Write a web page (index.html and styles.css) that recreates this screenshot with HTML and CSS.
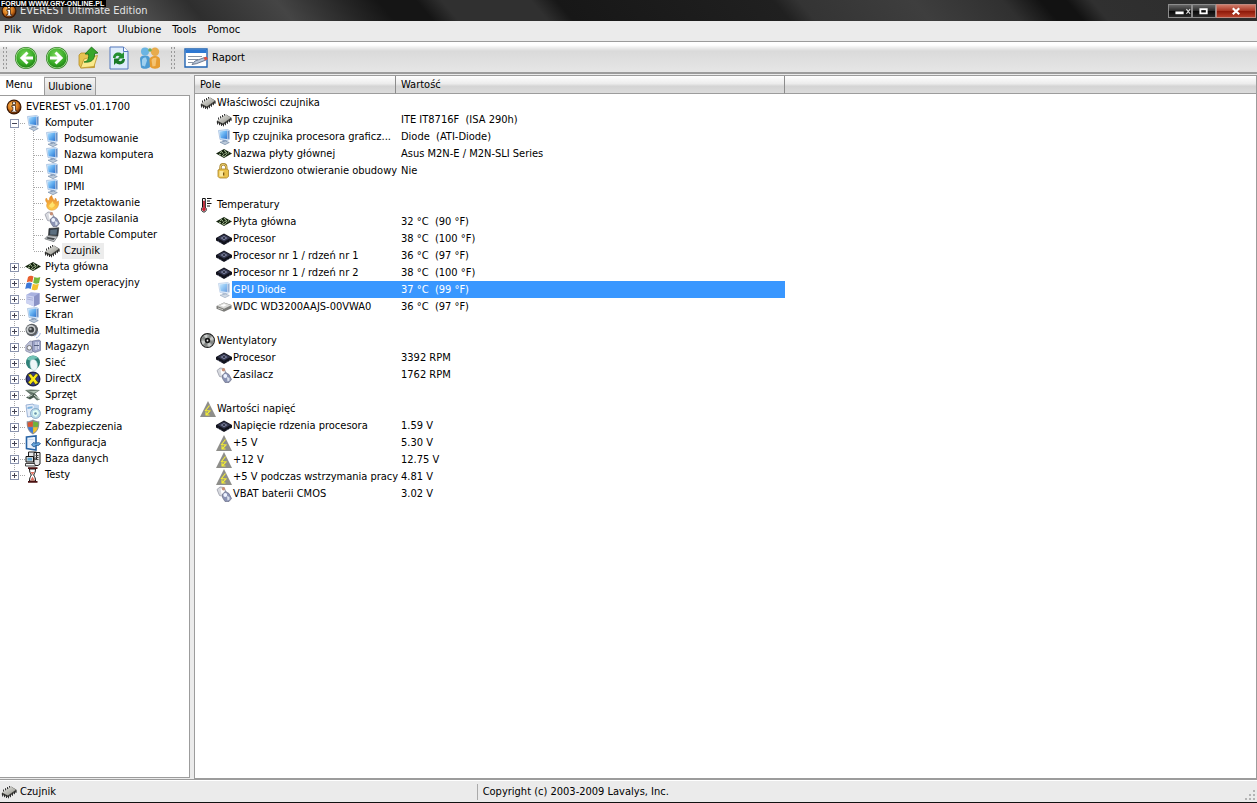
FILE: index.html
```html
<!DOCTYPE html>
<html lang="pl">
<head>
<meta charset="utf-8">
<title>EVEREST Ultimate Edition</title>
<link rel="stylesheet" href="styles.css">
</head>
<body>
<svg class="defs" aria-hidden="true">
  <defs>
    <linearGradient id="screen" x1="0" y1="0" x2="1" y2="1"><stop offset="0" stop-color="#b9e4ff"/><stop offset=".5" stop-color="#62aef0"/><stop offset="1" stop-color="#2f74cf"/></linearGradient>
    <linearGradient id="metal" x1="0" y1="0" x2="1" y2="1"><stop offset="0" stop-color="#f0f0ec"/><stop offset="1" stop-color="#8a8a82"/></linearGradient>
    <radialGradient id="orange" cx=".4" cy=".35" r=".7"><stop offset="0" stop-color="#ffc35a"/><stop offset=".6" stop-color="#d8791c"/><stop offset="1" stop-color="#6b2c05"/></radialGradient>
    <radialGradient id="green" cx=".45" cy=".35" r=".7"><stop offset="0" stop-color="#7bd95a"/><stop offset=".65" stop-color="#35a824"/><stop offset="1" stop-color="#187510"/></radialGradient>
    <linearGradient id="flame" x1="0" y1="0" x2="0" y2="1"><stop offset="0" stop-color="#e8842a"/><stop offset="1" stop-color="#ffcf4a"/></linearGradient>
  </defs>
  <symbol id="i-info" viewBox="0 0 16 16"><circle cx="8" cy="8" r="7.5" fill="#3a1803"/><circle cx="8" cy="8" r="6.3" fill="url(#orange)"/><path d="M6.500 3h3v2.400h-3zM5.800 6.500h3.700v5h1.200V13H5.600v-1.500h1.300V8H5.800z" fill="#fff" stroke="#2b1000" stroke-width=".7"/></symbol>
  <symbol id="i-pc" viewBox="0 0 16 16"><path d="M2.500 1.500l9-1 2 1v8.700l-2 1.300L4 10.500z" fill="#dceafa" stroke="#9ab8dc" stroke-width=".7"/><path d="M3.600 2.500l7.600-1v8.500L4.600 9.300z" fill="url(#screen)"/><path d="M11.600 1.500v9l1.500-.9V2.200z" fill="#6d90c4"/><path d="M6.500 10.800l4 .4.500 2-4.500.3z" fill="#8fa5c4"/><path d="M4 13.200l5.500-1.200 3.800 1.500-4.300 2.200z" fill="#bccada" stroke="#6f86a5" stroke-width=".6"/></symbol>
  <symbol id="i-flame" viewBox="0 0 16 16"><path d="M3.200 8C1 6 1.500 3.500 2.500 3c.3 2 1.800 2.700 2.800 2.500C5 3.500 6 1 8 .5c-.5 2 1.500 3 2 5 1-.5 1.300-1.300 1.200-2.500 1.500 1 1.500 3 1.200 4 1 0 1.800-.5 2-1.200 1 3.500-.5 9.200-6.400 9.400C4 15.200 1.500 12 3.200 8z" fill="url(#flame)" stroke="#d98a26" stroke-width=".5"/><path d="M6 9c2-1 2-2 2-3 2 2 1 3 3 3.500-.5 3-4.500 4.500-6 1.500z" fill="#ffe26d"/></symbol>
  <symbol id="i-plug" viewBox="0 0 16 16"><path d="M1 3.500L4 1l4 .5 2 4-2 5-4.500-1z" fill="#d7d9df" stroke="#999ca8" stroke-width=".8"/><path d="M4.500 2.500l3.500.5.500 4-3 1z" fill="#fff"/><circle cx="7.500" cy="2.800" r="1.700" fill="#c79078"/><path d="M6.500 8l3-2.500 3.500 2 2.500 5-2.500 3H9l-2.500-4z" fill="#8b93b4" stroke="#6b7088" stroke-width=".7"/><circle cx="9.300" cy="9" r="1.900" fill="#eef3ff"/><path d="M11 10l2.500 1v2.500l-2 1z" fill="#dce3ef"/></symbol>
  <symbol id="i-laptop" viewBox="0 0 16 16"><path d="M5 1.500l9.800-.8-1 8.300L4.500 8.200z" fill="#333c45" stroke="#222" stroke-width=".6"/><path d="M6.300 3l6.800-.7-.6 5.500-6.400-.3z" fill="#5c6f80"/><path d="M4 8.500l9.500 1-3.500 5.200L.8 11.800z" fill="#c2c5c8" stroke="#626669" stroke-width=".7"/><path d="M3.500 10l7.500 1.300-1.500 1.700-7-1.500z" fill="#45494d"/></symbol>
  <symbol id="i-chip" viewBox="0 0 16 16"><path d="M.8 9L10 2.500l5.500 3.300v1.700L7 13.200.8 10.700z" fill="#4a4a46"/><path d="M1.200 8.600L10 2.800l4.900 3L6.800 11.400z" fill="url(#metal)"/><path d="M1.500 9.500v3M3.500 10.200v3M5.500 11v3M7.500 11.500v2.800M9.500 10.200v3M11.500 8.800v3M13.500 7.500v2.700M15 6.500v2.500M2.500 5.500v2M4.500 4.200v2M6.500 3v2M8.500 2v1.500" stroke="#222" stroke-width=".9"/></symbol>
  <symbol id="i-board" viewBox="0 0 16 16"><path d="M0 7.500l8-4.500 8 4.500-8 4.500z" fill="#14240e"/><path d="M4 6.500l2-1m2-1l2 1m2 1l1 .8M3 8l2 1m1 .5l2 1 2-1M6 7l1-.5m2 .8l2-.8M7 8.500l1.500-.8m1.500.8l1.500-.7" stroke="#b7cda4" stroke-width="1"/></symbol>
  <symbol id="i-win" viewBox="0 0 16 16"><path d="M3 2c2-1.500 3.500-1.500 5.500-.5L7.300 7.300C5.500 6.300 3.800 6.300 1.800 7.300z" fill="#e9602f"/><path d="M9.300 2c2 1 4 1 6 0L14 8c-2 1-3.900.8-5.800-.2z" fill="#75b83c"/><path d="M1.500 8.200c2-1 3.700-.8 5.500 0l-1.300 5.800C4 13 2.300 13 .2 14z" fill="#3b78d8"/><path d="M7.900 8.700c2 1 3.900 1 5.900 0l-1.300 5.800c-2 1-4 1-5.900 0z" fill="#f3c12e"/></symbol>
  <symbol id="i-server" viewBox="0 0 16 16"><path d="M1 4l5-2.800 8.500.8v11L9 15.500 1 12z" fill="#a9b2e0"/><path d="M1 4l8 1.500v10L1 12z" fill="#cdd3f1"/><path d="M9 5.500L14.500 2v11L9 15.500z" fill="#8b93c6"/><path d="M2 6l6 1.200M2 8l6 1.200" stroke="#aab1da"/></symbol>
  <symbol id="i-sound" viewBox="0 0 16 16"><circle cx="6.800" cy="7" r="6.200" fill="#5c6064"/><circle cx="6" cy="6.500" r="4.600" fill="#c9ccce"/><circle cx="6.200" cy="6.700" r="2.900" fill="#3c4043"/><circle cx="5.500" cy="6" r="1.200" fill="#a9adb0"/><path d="M9 13c2.500-.5 3.500-2 4-4.500M11 15c2.500-1 3.800-2.700 4.300-5" fill="none" stroke="#9baed0"/></symbol>
  <symbol id="i-disks" viewBox="0 0 16 16"><path d="M.8 6.500L5 2l5 .8v9L5.500 14 .8 12z" fill="#bcc0d6" stroke="#74799a" stroke-width=".6"/><path d="M7.500 2L14 1l1.500 1v9.500l-5.500 2-2.500-1.500z" fill="#9ba2c6" stroke="#62688c" stroke-width=".6"/><circle cx="4.300" cy="8.800" r="2.300" fill="#eff1f7" stroke="#777"/><path d="M11 3v8M13.300 3v7" stroke="#e4e8f5"/><path d="M9 6.500h5" stroke="#56607e"/></symbol>
  <symbol id="i-net" viewBox="0 0 16 16"><circle cx="8" cy="7.500" r="7" fill="#2f8078"/><path d="M2 4C5 0 10 0 13 3c-2 1-4 .5-5.500 1.500S4 6 2 4z" fill="#72c2b5"/><path d="M5 8c0-3 2-4 4-3.500 2 .5 3.500 3 3.500 6S11 15.500 9 15.500 5 13 5 8z" fill="#eef6f8" stroke="#a5ced2" stroke-width=".6"/></symbol>
  <symbol id="i-dx" viewBox="0 0 16 16"><circle cx="8" cy="8" r="7.500" fill="#20244f"/><circle cx="8" cy="8" r="5.900" fill="#3a4088"/><path d="M2.800 3.500L6 2.800l2.200 3L11 2.500l2.500 1.300L10.300 8l3.200 4-3 1.500-2.300-3-2.700 3-2.500-2L6 8z" fill="#f8e817" stroke="#2e2d0d" stroke-width=".6"/></symbol>
  <symbol id="i-hw" viewBox="0 0 16 16"><path d="M0 3l6-.5 9 .5-5 3.500 5 6-3 1-6-5.500z" fill="#65766b"/><path d="M.5 3l5.500 1.300 8-.8-5 2.500z" fill="#b4c6b7"/><path d="M1 10.500l7-4 4 2-7 4z" fill="#47584e"/><path d="M3 10l4.500-2.200M9 8l5 4" stroke="#d3dfd3"/></symbol>
  <symbol id="i-prog" viewBox="0 0 16 16"><path d="M1 2l7-1 1.500 2v10l-7 1z" fill="#e4ecf8" stroke="#87a2cb" stroke-width=".8"/><path d="M2.500 4l5-.7v2l-5 .7z" fill="#7db2de"/><path d="M9 1l5 1v5H9z" fill="#bed5ee"/><circle cx="10.500" cy="10.500" r="5" fill="#b9dae9" stroke="#7197b7" stroke-width=".7"/><path d="M8 8l4-1 2 3-3 4-3-2z" fill="#e4fff4"/><circle cx="10.500" cy="10.500" r="1.300" fill="#6792af"/></symbol>
  <symbol id="i-shield" viewBox="0 0 16 16"><path d="M8 .5c2 1.300 4 1.700 6.300 1.800.2 6-1 10-6.300 13.200C2.700 12.300 1.500 8.300 1.700 2.300 4 2.200 6 1.800 8 .5z" fill="#888e99"/><path d="M7.800 2v5.700H3C2.700 6.300 2.700 5 2.700 3.500c2-.1 3.600-.5 5.100-1.500z" fill="#dc5630"/><path d="M8.200 2c1.500 1 3.100 1.400 5.100 1.500 0 1.500 0 2.800-.3 4.200H8.200z" fill="#70b43a"/><path d="M3.100 8.200h4.700v6c-2.500-1.500-4-3.500-4.700-6z" fill="#3b79d6"/><path d="M8.200 8.200h4.700c-.7 2.500-2.200 4.500-4.700 6z" fill="#f2c32a"/></symbol>
  <symbol id="i-conf" viewBox="0 0 16 16"><path d="M1.500 2L11 1v14l-9.500-1.500z" fill="#e9f1fb" stroke="#2663a5" stroke-width="1.600"/><path d="M3.500 4.500h5" stroke="#c4d6ec"/><path d="M6.500 10l2-2.500 2 .8 3-.8 2 1-1.500 1.700-3 .3L9 12z" fill="#68a6dc" stroke="#1e5690" stroke-width=".8"/></symbol>
  <symbol id="i-db" viewBox="0 0 16 16"><path d="M3.500 1h8v7h-8zM9 1.500h6V13l-2 1.500H9z" fill="#e7e7e7" stroke="#1d1d1d"/><path d="M10.500 4.500h3M10.500 6.500h3M10.500 8.500h3" stroke="#444"/><path d="M1 5.500h7.500v5.500H1z" fill="#d7d7d7" stroke="#111"/><path d="M2.500 6.800h4.500v2.700H2.500z" fill="#5da4ce"/><path d="M.5 12.500h9l1 2.500H.5z" fill="#fafafa" stroke="#111" stroke-width=".8"/></symbol>
  <symbol id="i-glass" viewBox="0 0 16 16"><path d="M4.500 2h6c0 3-.8 4-1.800 6 1 2 1.800 3 1.800 6h-6c0-3 .8-4 1.800-6-1-2-1.800-3-1.800-6z" fill="#fff" stroke="#111"/><path d="M5.500 5h4l-2 3zM5.300 13.500l2.200-4 2.300 4z" fill="#e0705f"/><path d="M3 1.200h9.500M3 14.800h9.500" stroke="#4a1010" stroke-width="1.800"/></symbol>
  <symbol id="i-lock" viewBox="0 0 16 16"><path d="M4.500 7V4.500c0-2 1-3.200 2.800-3.200s3 1.200 3 3.200V7" fill="none" stroke="#a8842a" stroke-width="2.400"/><path d="M4.500 7V4.500c0-2 1-3.200 2.800-3.200s3 1.200 3 3.200V7" fill="none" stroke="#f0d77a"/><path d="M2 7l2-1h7l1.500 1v6.500L10.500 15h-7L2 13.500z" fill="#eac14a" stroke="#a8842a" stroke-width=".8"/><path d="M3.500 8h4v5.500h-4z" fill="#fae79c"/><path d="M7 9.500h1.300v3H7z" fill="#785711"/></symbol>
  <symbol id="i-temp" viewBox="0 0 16 16"><path d="M2.500 1.500h2.800v8.700c2 2 .8 4.800-1.400 4.800S.5 12.200 2.500 10.200z" fill="#fff" stroke="#111"/><path d="M3.500 4h1v6.500c1.500 1 1 3.300-.6 3.300s-2-2.300-.4-3.300z" fill="#d11f32" stroke="#b01525" stroke-width=".7"/><path d="M7 1.500h4.500M7 4h3M7 6.500h4.500M7 9h3" stroke="#111"/></symbol>
  <symbol id="i-cpu" viewBox="0 0 16 16"><path d="M0 7L8 2.500 16 7v2.500L8 14 0 9.500z" fill="#11121c"/><path d="M1.500 7L8 3.400 14.500 7 8 10.800z" fill="#33364d"/><path d="M4.500 7L8 4.900 11.500 7 8 9.200z" fill="#7d83a2"/><path d="M6.300 7L8 6l1.700 1L8 8z" fill="#191b29"/><path d="M2 10l1 .7m1.500.8l1 .7m5 0l1-.7m1.500-.8l1-.7" stroke="#6a708c"/></symbol>
  <symbol id="i-hdd" viewBox="0 0 16 16"><path d="M.5 7L8 3.500l7.500 2.600v3.200L8 12.700.5 9.700z" fill="#7c7c79"/><path d="M.8 6.800L8 3.700l7.200 2.500L8 9.800z" fill="#d9d9d6"/><path d="M4.500 6.500l3.500-1.600 3 1-3.500 1.800z" fill="#fff"/><path d="M2 9l5 1.700" stroke="#c9c9c4"/></symbol>
  <symbol id="i-fan" viewBox="0 0 16 16"><circle cx="7.500" cy="7.500" r="6.900" fill="#a3a6a4" stroke="#222" stroke-width="1.200"/><path d="M7.500 7.500L4 2.500 7 1.500zM7.500 7.500l5-4 1.500 3zM7.500 7.500l4 5-3 1.500zM7.500 7.500l-5 4L1.500 8z" fill="#c9ccca"/><path d="M7.500 7.500L9 1.500l2.500 1.200zM7.500 7.500l6.500 1-1.500 3zM7.500 7.500l-1 6.500-3-2zM7.500 7.500L1.500 6l2-3z" fill="#808482"/><circle cx="7.500" cy="7.500" r="2.700" fill="#151515"/><circle cx="7.500" cy="7.500" r=".9" fill="#eee"/></symbol>
  <symbol id="i-volt" viewBox="0 0 16 16"><path d="M8 0l8 16H0z" fill="#8e8e8a"/><path d="M9.500 4.500L5.500 9.500l4.500.5-3.500 3.500M6 10.500V14h3.500" fill="none" stroke="#f5ee32" stroke-width="1.100"/></symbol>
  <symbol id="i-back" viewBox="0 0 24 24"><circle cx="12" cy="12" r="11" fill="#277b1b"/><circle cx="12" cy="12" r="10" fill="url(#green)" stroke="#b3e5a0" stroke-width=".8"/><path d="M12.500 5.500L5.800 12l6.700 6.500 2-2-3-2.900H19v-3.200h-7.500l3-2.900z" fill="#fff"/></symbol>
  <symbol id="i-fwd" viewBox="0 0 24 24"><circle cx="12" cy="12" r="11" fill="#277b1b"/><circle cx="12" cy="12" r="10" fill="url(#green)" stroke="#b3e5a0" stroke-width=".8"/><path d="M11.500 5.500l6.700 6.500-6.700 6.500-2-2 3-2.900H5v-3.200h7.500l-3-2.900z" fill="#fff"/></symbol>
  <symbol id="i-up" viewBox="0 0 24 24"><path d="M3 9l2-2h5l1.500 2h7v12.500L5 22 3 19z" fill="#e6c350" stroke="#b58b23" stroke-width=".8"/><path d="M4.500 22L8 13l13.500-3.500-3.500 11z" fill="#faea8c" stroke="#bb942c" stroke-width=".8"/><path d="M8 16c4.500-1 5-4 4.500-8H9l6.500-7L22 7l-3.500.5C19 13.500 15.500 17 8 16z" fill="#38a62c" stroke="#1c6f18" stroke-width=".8"/></symbol>
  <symbol id="i-reload" viewBox="0 0 24 24"><path d="M3 1h13.500L21 5.500V23H3z" fill="#dfecfb" stroke="#5579bd"/><path d="M16.500 1v4.500H21" fill="#fff" stroke="#5579bd"/><path d="M6 12c0-5 5.500-7 9-4l2-2v6.500h-6.500l2-2c-2-1.500-3.500-.5-4 1.500z" fill="#249030"/><path d="M18 13c0 5-5.500 7-9 4l-2 2v-6.500h6.500l-2 2c2 1.500 3.500.5 4-1.500z" fill="#1a7a28"/></symbol>
  <symbol id="i-people" viewBox="0 0 24 24"><path d="M2 13c0-3 3-3.500 5-3.500s5 .5 5 4V21c-2 2-7 2.500-9 .5z" fill="#4c9bd3"/><path d="M4 14c.5-2 2-2.500 4-2.500l1 3-2 6-3-1z" fill="#9fd0ef"/><circle cx="7" cy="5.500" r="4" fill="#6bb4e2"/><path d="M11.500 14c0-3 3-4 5.500-4s5 1 5 4v6.500c-2 3-8 3-10 0z" fill="#e69c31"/><path d="M13.500 14c1-2 3-2.500 5-2l-1 8-3 .5z" fill="#f4c373"/><circle cx="17" cy="5.800" r="4.200" fill="#e7ab4d"/><circle cx="12" cy="4" r="1.800" fill="#74ad57"/></symbol>
  <symbol id="i-report" viewBox="0 0 24 20"><path d="M1 1h22v18H1z" fill="#fff" stroke="#2164b3" stroke-width="1.400"/><path d="M1.500 1.500h21V5h-21z" fill="#2d78d2"/><path d="M4 8.500h14M4 11.500h10M4 14.500h5" stroke="#8794a5"/><path d="M8 16.500l3-3.500 9.500-3.500 1.500 2.500-9.500 3.700z" fill="#b9c7d9" stroke="#43536e" stroke-width=".7"/><path d="M19.500 9.800l3-1.300 1.500 2.500-3 1.400z" fill="#de5241"/></symbol>
</svg>

<header class="titlebar">
  <svg class="icon"><use href="#i-info"/></svg>
  <h1 class="title">EVEREST Ultimate Edition</h1>
  <span class="watermark">FORUM WWW.GRY-ONLINE.PL</span>
  <div class="controls">
    <button class="ctl" aria-label="Minimalizuj"><svg viewBox="0 0 24 13"><path d="M7 7h9v3H7z" fill="#fff"/><path d="M19 4.500l4 5m0-5l-4 5" stroke="#ddd" stroke-width="1.300"/></svg></button>
    <button class="ctl" aria-label="Maksymalizuj"><svg viewBox="0 0 24 13"><path d="M8 4.500h7v4.500H8z" fill="none" stroke="#fff" stroke-width="2"/></svg></button>
    <button class="ctl ctl-close" aria-label="Zamknij"><svg viewBox="0 0 38 13"><path d="M15.500 3.500l7 6.500m0-6.500l-7 6.500" stroke="#fff" stroke-width="2.400"/></svg></button>
  </div>
</header>

<nav class="menubar">
  <button>Plik</button><button>Widok</button><button>Raport</button><button>Ulubione</button><button>Tools</button><button>Pomoc</button>
</nav>

<div class="toolbar">
  <span class="grip"></span>
  <button aria-label="Wstecz"><svg><use href="#i-back"/></svg></button>
  <button aria-label="Dalej"><svg><use href="#i-fwd"/></svg></button>
  <button aria-label="W górę"><svg><use href="#i-up"/></svg></button>
  <button aria-label="Odśwież"><svg><use href="#i-reload"/></svg></button>
  <button aria-label="Użytkownicy"><svg><use href="#i-people"/></svg></button>
  <span class="grip grip-second"></span>
  <button class="report"><svg><use href="#i-report"/></svg>Raport</button>
</div>

<main class="workspace">
  <aside class="sidebar">
    <div class="tabs" role="tablist"><button class="tab active" role="tab" aria-selected="true">Menu</button><button class="tab" role="tab" aria-selected="false">Ulubione</button></div>
    <ul class="tree">
      <li class="node root"><svg class="icon"><use href="#i-info"/></svg><span class="label">EVEREST v5.01.1700</span></li>
      <li class="node first"><span class="guide"><button class="toggle open" aria-label="Zwiń Komputer"></button></span><svg class="icon"><use href="#i-pc"/></svg><span class="label">Komputer</span></li>
      <li>
        <ul class="branch">
          <li class="node"><svg class="icon"><use href="#i-pc"/></svg><span class="label">Podsumowanie</span></li>
          <li class="node"><svg class="icon"><use href="#i-pc"/></svg><span class="label">Nazwa komputera</span></li>
          <li class="node"><svg class="icon"><use href="#i-pc"/></svg><span class="label">DMI</span></li>
          <li class="node"><svg class="icon"><use href="#i-pc"/></svg><span class="label">IPMI</span></li>
          <li class="node"><svg class="icon"><use href="#i-flame"/></svg><span class="label">Przetaktowanie</span></li>
          <li class="node"><svg class="icon"><use href="#i-plug"/></svg><span class="label">Opcje zasilania</span></li>
          <li class="node"><svg class="icon"><use href="#i-laptop"/></svg><span class="label">Portable Computer</span></li>
          <li class="node last"><svg class="icon"><use href="#i-chip"/></svg><span class="label current">Czujnik</span></li>
        </ul>
      </li>
      <li class="node"><span class="guide"><button class="toggle" aria-label="Rozwiń Płyta główna"></button></span><svg class="icon"><use href="#i-board"/></svg><span class="label">Płyta główna</span></li>
      <li class="node"><span class="guide"><button class="toggle" aria-label="Rozwiń System operacyjny"></button></span><svg class="icon"><use href="#i-win"/></svg><span class="label">System operacyjny</span></li>
      <li class="node"><span class="guide"><button class="toggle" aria-label="Rozwiń Serwer"></button></span><svg class="icon"><use href="#i-server"/></svg><span class="label">Serwer</span></li>
      <li class="node"><span class="guide"><button class="toggle" aria-label="Rozwiń Ekran"></button></span><svg class="icon"><use href="#i-pc"/></svg><span class="label">Ekran</span></li>
      <li class="node"><span class="guide"><button class="toggle" aria-label="Rozwiń Multimedia"></button></span><svg class="icon"><use href="#i-sound"/></svg><span class="label">Multimedia</span></li>
      <li class="node"><span class="guide"><button class="toggle" aria-label="Rozwiń Magazyn"></button></span><svg class="icon"><use href="#i-disks"/></svg><span class="label">Magazyn</span></li>
      <li class="node"><span class="guide"><button class="toggle" aria-label="Rozwiń Sieć"></button></span><svg class="icon"><use href="#i-net"/></svg><span class="label">Sieć</span></li>
      <li class="node"><span class="guide"><button class="toggle" aria-label="Rozwiń DirectX"></button></span><svg class="icon"><use href="#i-dx"/></svg><span class="label">DirectX</span></li>
      <li class="node"><span class="guide"><button class="toggle" aria-label="Rozwiń Sprzęt"></button></span><svg class="icon"><use href="#i-hw"/></svg><span class="label">Sprzęt</span></li>
      <li class="node"><span class="guide"><button class="toggle" aria-label="Rozwiń Programy"></button></span><svg class="icon"><use href="#i-prog"/></svg><span class="label">Programy</span></li>
      <li class="node"><span class="guide"><button class="toggle" aria-label="Rozwiń Zabezpieczenia"></button></span><svg class="icon"><use href="#i-shield"/></svg><span class="label">Zabezpieczenia</span></li>
      <li class="node"><span class="guide"><button class="toggle" aria-label="Rozwiń Konfiguracja"></button></span><svg class="icon"><use href="#i-conf"/></svg><span class="label">Konfiguracja</span></li>
      <li class="node"><span class="guide"><button class="toggle" aria-label="Rozwiń Baza danych"></button></span><svg class="icon"><use href="#i-db"/></svg><span class="label">Baza danych</span></li>
      <li class="node last"><span class="guide"><button class="toggle" aria-label="Rozwiń Testy"></button></span><svg class="icon"><use href="#i-glass"/></svg><span class="label">Testy</span></li>
    </ul>
  </aside>

  <section class="details">
    <table class="grid">
      <colgroup><col class="col-field"><col class="col-value"><col></colgroup>
      <thead><tr><th scope="col">Pole</th><th scope="col">Wartość</th><td></td></tr></thead>
      <tbody>
        <tr class="group"><td><div class="cell"><svg class="icon"><use href="#i-chip"/></svg><span class="label">Właściwości czujnika</span></div></td><td></td></tr>
        <tr><td><div class="cell"><svg class="icon"><use href="#i-chip"/></svg><span class="label">Typ czujnika</span></div></td><td>ITE IT8716F&nbsp; (ISA 290h)</td></tr>
        <tr><td><div class="cell"><svg class="icon"><use href="#i-pc"/></svg><span class="label">Typ czujnika procesora graficz...</span></div></td><td>Diode&nbsp; (ATI-Diode)</td></tr>
        <tr><td><div class="cell"><svg class="icon"><use href="#i-board"/></svg><span class="label">Nazwa płyty głównej</span></div></td><td>Asus M2N-E / M2N-SLI Series</td></tr>
        <tr><td><div class="cell"><svg class="icon"><use href="#i-lock"/></svg><span class="label">Stwierdzono otwieranie obudowy</span></div></td><td>Nie</td></tr>
        <tr class="spacer"><td></td><td></td></tr>
        <tr class="group"><td><div class="cell"><svg class="icon"><use href="#i-temp"/></svg><span class="label">Temperatury</span></div></td><td></td></tr>
        <tr><td><div class="cell"><svg class="icon"><use href="#i-board"/></svg><span class="label">Płyta główna</span></div></td><td>32 °C&nbsp; (90 °F)</td></tr>
        <tr><td><div class="cell"><svg class="icon"><use href="#i-cpu"/></svg><span class="label">Procesor</span></div></td><td>38 °C&nbsp; (100 °F)</td></tr>
        <tr><td><div class="cell"><svg class="icon"><use href="#i-cpu"/></svg><span class="label">Procesor nr 1 / rdzeń nr 1</span></div></td><td>36 °C&nbsp; (97 °F)</td></tr>
        <tr><td><div class="cell"><svg class="icon"><use href="#i-cpu"/></svg><span class="label">Procesor nr 1 / rdzeń nr 2</span></div></td><td>38 °C&nbsp; (100 °F)</td></tr>
        <tr class="selected"><td><div class="cell"><svg class="icon"><use href="#i-pc"/></svg><span class="label">GPU Diode</span></div></td><td>37 °C&nbsp; (99 °F)</td></tr>
        <tr><td><div class="cell"><svg class="icon"><use href="#i-hdd"/></svg><span class="label">WDC WD3200AAJS-00VWA0</span></div></td><td>36 °C&nbsp; (97 °F)</td></tr>
        <tr class="spacer"><td></td><td></td></tr>
        <tr class="group"><td><div class="cell"><svg class="icon"><use href="#i-fan"/></svg><span class="label">Wentylatory</span></div></td><td></td></tr>
        <tr><td><div class="cell"><svg class="icon"><use href="#i-cpu"/></svg><span class="label">Procesor</span></div></td><td>3392 RPM</td></tr>
        <tr><td><div class="cell"><svg class="icon"><use href="#i-plug"/></svg><span class="label">Zasilacz</span></div></td><td>1762 RPM</td></tr>
        <tr class="spacer"><td></td><td></td></tr>
        <tr class="group"><td><div class="cell"><svg class="icon"><use href="#i-volt"/></svg><span class="label">Wartości napięć</span></div></td><td></td></tr>
        <tr><td><div class="cell"><svg class="icon"><use href="#i-cpu"/></svg><span class="label">Napięcie rdzenia procesora</span></div></td><td>1.59 V</td></tr>
        <tr><td><div class="cell"><svg class="icon"><use href="#i-volt"/></svg><span class="label">+5 V</span></div></td><td>5.30 V</td></tr>
        <tr><td><div class="cell"><svg class="icon"><use href="#i-volt"/></svg><span class="label">+12 V</span></div></td><td>12.75 V</td></tr>
        <tr><td><div class="cell"><svg class="icon"><use href="#i-volt"/></svg><span class="label">+5 V podczas wstrzymania pracy</span></div></td><td>4.81 V</td></tr>
        <tr><td><div class="cell"><svg class="icon"><use href="#i-plug"/></svg><span class="label">VBAT baterii CMOS</span></div></td><td>3.02 V</td></tr>
      </tbody>
    </table>
  </section>
</main>

<footer class="statusbar">
  <div class="status-item"><svg class="icon"><use href="#i-chip"/></svg>Czujnik</div>
  <div class="status-copy">Copyright (c) 2003-2009 Lavalys, Inc.</div>
  <svg class="size-grip" viewBox="0 0 10 10"><path d="M8 0h2v2H8zM4 4h2v2H4zM8 4h2v2H8zM0 8h2v2H0zM4 8h2v2H4zM8 8h2v2H8z" fill="#b4b4b4"/></svg>
</footer>
</body>
</html>
```
FILE: styles.css
```css
* { box-sizing: border-box; }

body {
  margin: 0;
  min-height: 100vh;
  display: flex;
  flex-direction: column;
  background: #ebebeb;
  color: #000;
  font: 11px/16px "DejaVu Sans Condensed", "DejaVu Sans", sans-serif;
  border-bottom: 1px solid #111;
}

button {
  margin: 0;
  padding: 0;
  border: 0;
  background: none;
  color: inherit;
  font: inherit;
}

ul { margin: 0; padding: 0; list-style: none; }
svg { display: block; }
.defs { position: absolute; width: 0; height: 0; }
.icon { width: 16px; height: 16px; flex: none; }

/* Title bar */
.titlebar {
  position: relative;
  display: flex;
  align-items: center;
  height: 21px;
  padding: 0 1px;
  gap: 3px;
  color: #e4e4e4;
  background: linear-gradient(50deg, #484848 0%, #505050 11%, #2e2e2e 16%, #454545 23%, #151515 31%, #151515 34%, #303030 36%, #303030 43%, #171717 45%, #202020 62%, #343434 64%, #3e3e3e 73%, #303030 80%, #121212 83%, #121212 85%, #303030 87%, #2c2c2c 100%);
}
.title { flex: 1; margin: 0; font-size: 11px; line-height: 14px; font-weight: 400; }
.watermark {
  position: absolute;
  top: 0;
  left: 0;
  padding: 0 2px 0 1px;
  background: #000;
  color: #fff;
  font: bold 7px/7px "Liberation Sans", sans-serif;
}
.controls { display: flex; }
.ctl {
  width: 24px;
  height: 14px;
  border: 1px solid #8c8c8c;
  background: linear-gradient(#666, #2a2a2a 50%, #080808 50%, #2a2a2a);
}
.ctl svg { width: 100%; height: 100%; }
.ctl-close {
  width: 40px;
  border-color: #c08a80;
  background: linear-gradient(#cf7a68, #a83522 50%, #8c1808 50%, #b8402a);
}

/* Menu bar */
.menubar {
  display: flex;
  gap: 11px;
  height: 21px;
  padding: 0 4px 2px;
  border-bottom: 1px solid #9c9c9c;
}

/* Toolbar */
.toolbar {
  display: flex;
  align-items: center;
  gap: 7px;
  height: 32px;
  padding: 2px 3px 0;
  background: linear-gradient(#fff 0 3px, #f2f2f2 5px, #dadada 9px, #e6e6e6);
  border-bottom: 2px solid #9c9c9c;
}
.toolbar svg { width: 24px; height: 24px; }
.grip {
  width: 4px;
  height: 22px;
  background: repeating-linear-gradient(transparent 0 2px, #ddd 2px 4px), repeating-linear-gradient(90deg, #999 0 1px, #ddd 1px 3px);
}
.grip-second { margin: 0 2px; }
.report { display: flex; align-items: center; gap: 4px; }
.report svg { height: 20px; }

/* Workspace */
.workspace {
  flex: 1;
  display: flex;
  gap: 4px;
  padding-top: 1px;
  border-bottom: 1px solid #9c9c9c;
  background: #ebebeb;
}
.sidebar { width: 190px; flex: none; display: flex; flex-direction: column; }
.tabs { display: flex; align-items: flex-end; height: 20px; border-top: 1px solid #ddd; }
.tab {
  height: 18px;
  width: 52px;
  border: 1px solid #9c9c9c;
  border-bottom: 0;
  background: linear-gradient(#f4f4f4, #d8d8d8);
}
.tab.active { width: 44px; height: 19px; padding: 0 6px 1px 0; border: 0; background: #fff; }
.tree {
  flex: 1;
  padding-top: 3px;
  background: #fff;
  border: solid #9c9c9c;
  border-width: 1px 1px 1px 0;
  margin-bottom: 1px;
}
.node { display: flex; align-items: center; height: 16px; }
.root { padding-left: 6px; }
.node .label { padding: 0 4px; white-space: nowrap; }
.node .current { margin-left: 2px; padding: 0 4px 0 2px; background: #ececec; }
.guide, .branch {
  --v: repeating-linear-gradient(#a8a8a8 0 1px, transparent 1px 2px);
  --h: repeating-linear-gradient(90deg, #a8a8a8 0 1px, transparent 1px 2px);
}
.guide {
  width: 25px;
  height: 16px;
  padding: 4px 0 0 10px;
  background: var(--v) 14px 0 / 1px 100% no-repeat, var(--h) 20px 8px / 5px 1px no-repeat;
}
.first .guide { background: var(--v) 14px 8px / 1px 8px no-repeat, var(--h) 20px 8px / 5px 1px no-repeat; }
.last .guide { background: var(--v) 14px 0 / 1px 8px no-repeat, var(--h) 20px 8px / 5px 1px no-repeat; }
.branch { background: var(--v) 14px 0 / 1px 100% no-repeat; }
.branch .node {
  padding-left: 44px;
  background: var(--v) 33px 0 / 1px 100% no-repeat, var(--h) 34px 8px / 10px 1px no-repeat;
}
.branch .last { background: var(--v) 33px 0 / 1px 8px no-repeat, var(--h) 34px 8px / 10px 1px no-repeat; }
.toggle {
  display: block;
  width: 9px;
  height: 9px;
  border: 1px solid #8a93ad;
  background:
    linear-gradient(#445, #445) center / 5px 1px no-repeat,
    linear-gradient(#445, #445) center / 1px 5px no-repeat,
    #fff;
}
.toggle.open { background: linear-gradient(#445, #445) center / 5px 1px no-repeat, #fff; }

/* Details */
.details {
  flex: 1;
  min-width: 0;
  background: #fff;
  border: 1px solid #9c9c9c;
}
.grid { width: 100%; table-layout: fixed; border-collapse: separate; border-spacing: 0; }
.grid td, .grid th { padding: 0; text-align: left; font-weight: 400; white-space: nowrap; }
.col-field { width: 201px; }
.col-value { width: 389px; }
.grid thead th, .grid thead td {
  height: 18px;
  padding-left: 5px;
  border-bottom: 1px solid #9c9c9c;
  background: linear-gradient(#fff, #ececec 45%, #d4d4d4 60%, #dcdcdc);
}
.grid thead th { border-right: 1px solid #8c8c8c; }
.grid tbody td { height: 17px; line-height: 17px; }
.grid tbody td + td { padding-left: 5px; }
.cell { display: flex; align-items: center; height: 17px; padding-left: 21px; }
.group .cell { padding-left: 5px; }
.cell .label { flex: 1; padding-left: 1px; }
.selected .label, .selected td + td { background: #3997ff; color: #fff; }
.selected .icon { opacity: 0.7; }

/* Status bar */
.statusbar { display: flex; align-items: center; height: 22px; border-top: 1px solid #fff; }
.status-item {
  display: flex;
  align-items: center;
  gap: 3px;
  width: 38%;
  height: 16px;
  padding-left: 1px;
  border-right: 1px solid #aaa;
}
.status-copy { flex: 1; padding-left: 5px; }
.size-grip { width: 10px; height: 10px; align-self: flex-end; margin: 2px; }
```
